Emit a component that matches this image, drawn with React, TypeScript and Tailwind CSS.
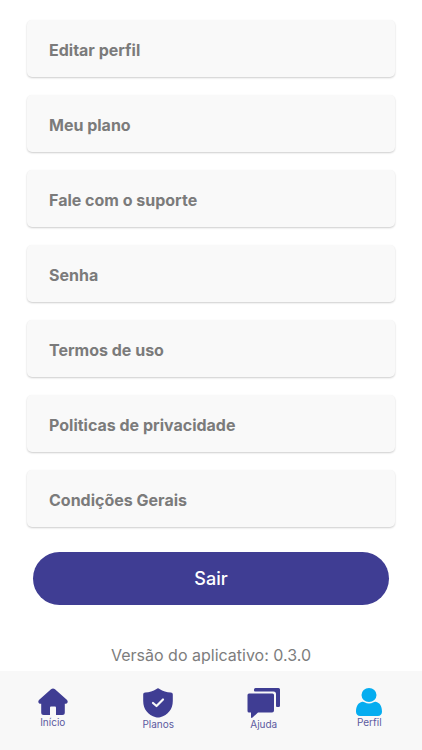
import React from 'react'

const options = [
  'Editar perfil',
  'Meu plano',
  'Fale com o suporte',
  'Senha',
  'Termos de uso',
  'Politicas de privacidade',
  'Condições Gerais',
]

const HomeIcon = () => (
  <svg width="30" height="28" viewBox="0 0 30 28" fill="currentColor" aria-hidden="true">
    <path d="M13 1.300a3 3 0 0 1 4 0l11.800 10.500c1.800 1.800.8 4-1.800 4h-.2v8.700a2.500 2.500 0 0 1-2.500 2.500H18v-7.200c0-.8-.5-1.300-1.300-1.300h-3.400c-.8 0-1.300.5-1.300 1.300V27H5.700a2.500 2.500 0 0 1-2.500-2.500v-8.700H3c-2.600 0-3.600-2.200-1.800-4z" />
  </svg>
)

const ShieldIcon = () => (
  <svg width="30" height="30" viewBox="0 0 30 30" fill="currentColor" aria-hidden="true">
    <path d="M13.500.9a2.500 2.500 0 0 1 3 0c3.400 2.300 7.100 3.300 11.300 3.500 1.200.1 2 .8 2 2V13c0 8.200-4.800 14-12.600 16.200-1.600.4-2.800.4-4.400 0C5 27 .2 21.200.2 13V6.400c0-1.200.8-1.900 2-2C6.400 4.200 10.100 3.200 13.500.9z" />
    <path d="M10 15l3.500 3 6.500-6.500" fill="none" stroke="#f8f8f8" strokeWidth="2.200" strokeLinecap="round" strokeLinejoin="round" />
  </svg>
)

const ChatIcon = () => (
  <svg width="34" height="30" viewBox="0 0 34 30" fill="currentColor" aria-hidden="true">
    <path d="M2 5.500h23.500A1.500 1.500 0 0 1 27 7v15.500a2 2 0 0 1-2 2H11l-5.500 5c-.8.700-1.500.4-1.500-.6v-4.400H2a1.500 1.500 0 0 1-1.500-1.500V7A1.500 1.500 0 0 1 2 5.500z" />
    <path d="M8.500 0h23A1.500 1.500 0 0 1 33 1.500v16.200a1.300 1.300 0 0 1-1.300 1.300H30a1 1 0 0 1-1-1V6a2.500 2.500 0 0 0-2.500-2.500H8a1 1 0 0 1-1-1v-1A1.500 1.500 0 0 1 8.500 0z" />
  </svg>
)

const UserIcon = () => (
  <svg width="26" height="28" viewBox="0 0 26 28" fill="currentColor" aria-hidden="true">
    <ellipse cx="13" cy="7" rx="7.500" ry="7" />
    <path d="M6.300 13.700c.8-.2 1.500.1 2.200.5 2.800 1.700 6.200 1.700 9 0 .7-.4 1.400-.7 2.200-.5 4.200.8 6.300 4.600 6.300 10 0 2.500-1.700 4.300-4.200 4.300H4.200C1.700 28 0 26.200 0 23.700c0-5.400 2.100-9.200 6.300-10z" />
  </svg>
)

const tabs = [
  { label: 'Início', icon: <HomeIcon />, active: false },
  { label: 'Planos', icon: <ShieldIcon />, active: false },
  { label: 'Ajuda', icon: <ChatIcon />, active: false },
  { label: 'Perfil', icon: <UserIcon />, active: true },
]

const App = () => {
  return (
    <div className="flex min-h-screen flex-col bg-white font-['Inter',sans-serif]">
      <main className="flex flex-1 flex-col px-[27px] pt-5">
        <ul className="flex flex-col gap-[18px]">
          {options.map((option) => (
            <li key={option} className="flex">
              <button
                type="button"
                className="h-[57px] w-full cursor-pointer rounded-[5px] bg-[#f9f9f9] px-[22px] pt-[2px] text-left text-base font-bold text-[#7b7b7b] shadow-[0_1px_2px_rgba(0,0,0,0.2)]"
              >
                {option}
              </button>
            </li>
          ))}
        </ul>

        <button
          type="button"
          className="mx-[6px] mt-[25px] h-[53px] cursor-pointer rounded-full bg-[#3f3d93] text-lg font-medium text-white"
        >
          Sair
        </button>

        <p className="mt-[38px] pb-1 text-center text-base text-[#7d7d7d]">
          Versão do aplicativo: 0.3.0
        </p>
      </main>

      <nav className="grid h-[79px] grid-cols-4 bg-[#f8f8f8] pt-[17px]">
        {tabs.map((tab) => (
          <a
            key={tab.label}
            href="#"
            aria-current={tab.active ? 'page' : undefined}
            className="flex flex-col items-center"
          >
            <span className={tab.active ? 'text-[#05adf0]' : 'text-[#3f3d93]'}>
              {tab.icon}
            </span>
            <span className="text-[10px] leading-3 text-[#5c5a9f]">{tab.label}</span>
          </a>
        ))}
      </nav>
    </div>
  )
}

export default App
